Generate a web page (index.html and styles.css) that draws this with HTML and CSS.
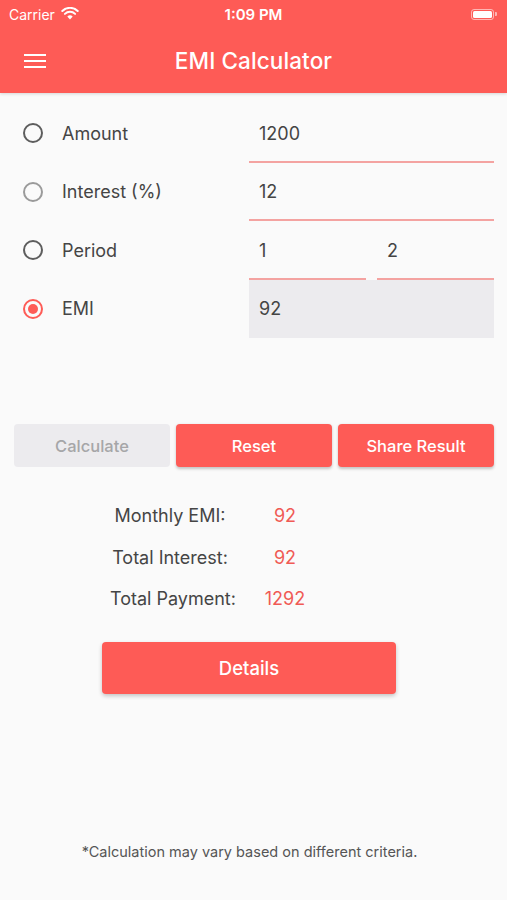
FILE: index.html
```html
<!DOCTYPE html>
<html>
<head>
<meta charset="utf-8">
<link rel="stylesheet" href="styles.css">
</head>
<body>
<div class="app">
  <header class="header">
    <div class="status">
      <div class="status-left">
        <span class="carrier">Carrier</span>
        <svg class="wifi" width="18" height="13" viewBox="0 0 18 13">
          <path d="M9 12.5 L6.3 9.4 A4 4 0 0 1 11.7 9.4 Z" fill="#fff"/>
          <path d="M3.9 6.9 A7.4 7.4 0 0 1 14.1 6.9" stroke="#fff" stroke-width="2" fill="none" stroke-linecap="round"/>
          <path d="M1.3 4.0 A11 11 0 0 1 16.7 4.0" stroke="#fff" stroke-width="2" fill="none" stroke-linecap="round"/>
        </svg>
      </div>
      <span class="time">1:09 PM</span>
      <div class="status-right">
        <span class="battery"><span class="battery-fill"></span></span><span class="battery-tip"></span>
      </div>
    </div>
    <div class="toolbar">
      <svg class="menu" width="22" height="16" viewBox="0 0 22 16">
        <rect x="0" y="1" width="22" height="2" fill="#fff"/>
        <rect x="0" y="7" width="22" height="2" fill="#fff"/>
        <rect x="0" y="13" width="22" height="2" fill="#fff"/>
      </svg>
      <h1 class="title">EMI Calculator</h1>
    </div>
  </header>

  <main class="content">
    <section class="form">
      <div class="row">
        <span class="radio"></span>
        <span class="label">Amount</span>
        <div class="field underline"><span>1200</span></div>
      </div>
      <div class="row">
        <span class="radio light"></span>
        <span class="label">Interest (%)</span>
        <div class="field underline"><span>12</span></div>
      </div>
      <div class="row">
        <span class="radio"></span>
        <span class="label">Period</span>
        <div class="field-pair">
          <div class="field underline"><span>1</span></div>
          <div class="field underline"><span>2</span></div>
        </div>
      </div>
      <div class="row">
        <span class="radio checked"></span>
        <span class="label">EMI</span>
        <div class="field filled"><span>92</span></div>
      </div>
    </section>

    <section class="buttons">
      <button class="btn disabled">Calculate</button>
      <button class="btn primary">Reset</button>
      <button class="btn primary">Share Result</button>
    </section>

    <section class="results">
      <div class="res-row"><span class="res-label">Monthly EMI:</span><span class="res-value">92</span></div>
      <div class="res-row"><span class="res-label">Total Interest:</span><span class="res-value">92</span></div>
      <div class="res-row"><span class="res-label">Total Payment:</span><span class="res-value">1292</span></div>
    </section>

    <button class="details">Details</button>

    <p class="note">*Calculation may vary based on different criteria.</p>
  </main>
</div>
</body>
</html>
```

FILE: styles.css
```css
* { box-sizing: border-box; }
html, body { margin: 0; padding: 0; }
body {
  background: #fafafa;
  font-family: Inter, "Noto Sans", Roboto, sans-serif;
  color: #444;
}
.app {
  width: 507px;
  min-height: 900px;
  display: flex;
  flex-direction: column;
}
.header {
  background: #fe5b56;
  height: 93px;
  color: #fff;
  box-shadow: 0 1px 3px rgba(0,0,0,0.15);
}
.status {
  height: 28px;
  display: flex;
  align-items: center;
  justify-content: space-between;
  padding: 0 10px 0 9px;
  position: relative;
}
.status-left { display: flex; align-items: center; gap: 6px; }
.carrier { font-size: 14px; color: #fff; }
.wifi { margin-top: -2px; }
.time {
  position: absolute;
  left: 0; right: 0;
  text-align: center;
  font-size: 15px;
  font-weight: 600;
  pointer-events: none;
}
.status-right { display: flex; align-items: center; }
.battery {
  width: 23px;
  height: 11px;
  border: 1px solid rgba(255,255,255,0.55);
  border-radius: 3px;
  padding: 1px;
  display: flex;
}
.battery-fill { flex: 1; background: #fff; border-radius: 1.5px; }
.battery-tip {
  width: 2px; height: 4px;
  background: rgba(255,255,255,0.55);
  border-radius: 0 1px 1px 0;
  margin-left: 1px;
}
.toolbar {
  height: 65px;
  display: flex;
  align-items: center;
  position: relative;
  padding-left: 24px;
}
.title {
  position: absolute;
  left: 0; right: 0;
  margin: 0;
  text-align: center;
  font-size: 22.5px;
  font-weight: 500;
  letter-spacing: 0.1px;
  pointer-events: none;
}
.content {
  flex: 1;
  display: flex;
  flex-direction: column;
}
.form {
  padding: 11px 13px 0 23px;
}
.row {
  display: grid;
  grid-template-columns: 20px 206px 245px;
  align-items: center;
  height: 58.5px;
}
.radio {
  width: 20px;
  height: 20px;
  border-radius: 50%;
  border: 2px solid #5d5d5d;
}
.radio.light { border-color: #9a9a9a; }
.radio.checked {
  border-color: #fe5b56;
  display: flex;
  align-items: center;
  justify-content: center;
}
.radio.checked::after {
  content: "";
  width: 10px; height: 10px;
  border-radius: 50%;
  background: #fe5b56;
}
.label {
  padding-left: 19px;
  font-size: 18px;
  color: #454545;
}
.field {
  height: 58.5px;
  display: flex;
  align-items: center;
  padding-left: 10px;
  font-size: 18px;
  color: #444;
}
.field.underline { border-bottom: 2px solid #f4a3a1; padding-top: 2px; }
.field.filled { background: #ecebee; }
.field-pair {
  display: grid;
  grid-template-columns: 117px 117px;
  column-gap: 11px;
}
.buttons {
  display: grid;
  grid-template-columns: repeat(3, 1fr);
  column-gap: 6px;
  padding: 0 13px 0 14px;
  margin-top: 86px;
}
.btn {
  height: 43px;
  border: none;
  border-radius: 4px;
  font-family: inherit;
  font-size: 16.5px;
  font-weight: 500;
  padding: 0;
}
.btn.disabled { background: #ecebee; color: #a6a6a8; }
.btn.primary {
  background: #fe5b56;
  color: #fff;
  box-shadow: 0 1.5px 3px rgba(0,0,0,0.22);
}
.results {
  margin-top: 28px;
  display: flex;
  flex-direction: column;
}
.res-row {
  display: grid;
  grid-template-columns: 110px 120px 110px;
  height: 41.5px;
  align-items: center;
  font-size: 18px;
}
.res-label {
  grid-column: 2;
  text-align: center;
  white-space: nowrap;
  color: #454545;
}
.res-value {
  grid-column: 3;
  text-align: center;
  color: #f05a55;
}
.details {
  margin: 22px 0 0 102px;
  width: 294px;
  height: 52px;
  border: none;
  border-radius: 4px;
  background: #fe5b56;
  color: #fff;
  font-family: inherit;
  font-size: 18.5px;
  font-weight: 500;
  box-shadow: 0 2px 4px rgba(0,0,0,0.22);
}
.note {
  margin: auto 0 40px 0;
  padding-right: 8px;
  text-align: center;
  font-size: 14.5px;
  color: #555;
}
```
